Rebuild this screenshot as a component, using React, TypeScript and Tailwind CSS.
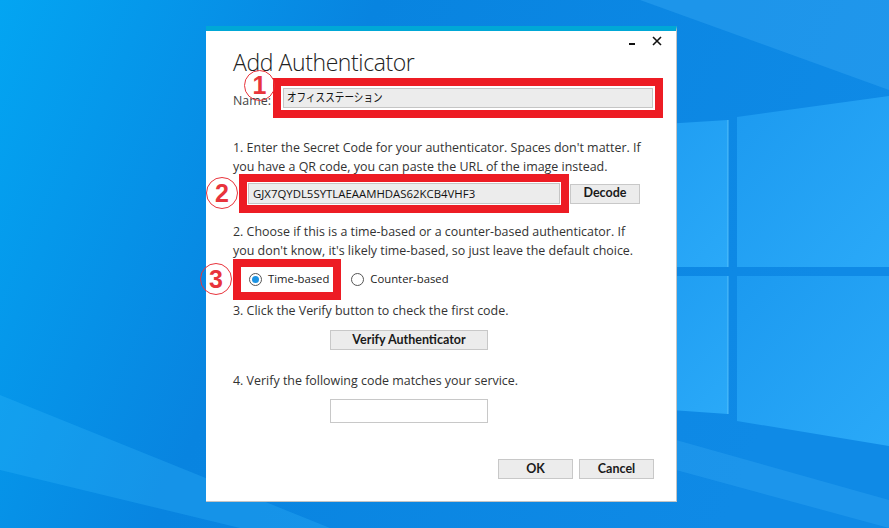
import React from 'react';

const FONT = '"Open Sans", "Noto Sans CJK JP", sans-serif';

function Wallpaper() {
  return (
    <svg className="absolute inset-0" width="889" height="528" viewBox="0 0 889 528">
      <defs>
        <linearGradient id="bg" x1="0" y1="0" x2="1" y2="0.25">
          <stop offset="0" stopColor="#03a5f2" />
          <stop offset="0.4" stopColor="#0884e0" />
          <stop offset="1" stopColor="#0f8ae6" />
        </linearGradient>
        <linearGradient id="pane" x1="0" y1="0" x2="1" y2="1">
          <stop offset="0" stopColor="#1c9af0" />
          <stop offset="1" stopColor="#2aa9f8" />
        </linearGradient>
      </defs>
      <rect width="889" height="528" fill="url(#bg)" />
      {/* light rays */}
      <polygon points="640,0 889,0 889,90" fill="#3fb0f7" opacity="0.35" />
      <polygon points="0,395 0,470 240,528 330,528" fill="#3cc0ff" opacity="0.25" />
      <polygon points="676,440 889,500 889,528 676,470" fill="#44b8fb" opacity="0.25" />
      {/* windows logo panes */}
      <polygon points="600,128 728,120 728,267 600,267" fill="url(#pane)" />
      <polygon points="737,117 889,96 889,267 737,267" fill="url(#pane)" />
      <polygon points="600,276 728,276 728,414 600,405" fill="url(#pane)" />
      <polygon points="737,276 889,276 889,446 737,421" fill="url(#pane)" />
      <line x1="728" y1="120" x2="728" y2="267" stroke="#6fd0ff" strokeWidth="1" opacity="0.7" />
      <line x1="728" y1="276" x2="728" y2="414" stroke="#6fd0ff" strokeWidth="1" opacity="0.7" />
    </svg>
  );
}

function Circled({ n, className }: { n: string; className: string }) {
  return (
    <div
      className={`absolute flex items-center justify-center rounded-full border border-[#e8343c] text-[#e8343c] font-bold text-[25px] leading-none ${className}`}
      style={{ fontFamily: '"Liberation Sans", sans-serif' }}
    >
      {n}
    </div>
  );
}

function Radio({ checked }: { checked?: boolean }) {
  return (
    <div className="w-[13px] h-[13px] rounded-full border border-[#555] bg-white flex items-center justify-center">
      {checked && <div className="w-[7px] h-[7px] rounded-full bg-[#1c93e3]" />}
    </div>
  );
}

function Button({ label, className }: { label: string; className: string }) {
  return (
    <div
      className={`h-[20px] bg-[#ececec] border border-[#c8c8c8] flex items-center justify-center text-[12.5px] font-bold text-[#1a1a1a] ${className}`}
      style={{ fontFamily: 'Lato, sans-serif' }}
    >
      {label}
    </div>
  );
}

export default function App() {
  return (
    <div className="relative w-[889px] h-[528px] overflow-hidden" style={{ fontFamily: FONT }}>
      <Wallpaper />

      {/* Dialog window */}
      <div className="absolute left-[206px] top-[26px] w-[471px] h-[476px] bg-white border-t-[5px] border-t-[#00a8d6] border-r border-b border-r-[#c4c4c4] border-b-[#c4c4c4] flex flex-col pl-[27px] pr-[22px]">
        {/* title bar controls */}
        <div className="h-[19px] flex justify-end items-center mr-[-8px]">
          <div className="w-[6px] h-[2px] bg-[#111] mt-[7px]" />
          <svg className="ml-[17px] mt-[1px]" width="10" height="10" viewBox="0 0 10 10">
            <path d="M1 1 L9 9 M9 1 L1 9" stroke="#111" strokeWidth="1.6" />
          </svg>
        </div>

        {/* title */}
        <div className="text-[23px] leading-[24px] font-light tracking-[-0.4px] text-[#222]">Add Authenticator</div>

        {/* name */}
        <div className="flex items-start mt-[14px]">
          <div className="text-[12.4px] leading-[16px] text-[#444] mt-[5px] w-[50px]">Name:</div>
          <div className="w-[370px] h-[20px] bg-[#ececec] border border-[#c5c5c5] text-[12px] text-[#111] px-[3px] flex items-center outline-solid outline-[8px] outline-[#ed1c24] outline-offset-2">
            <span className="inline-block origin-left scale-x-[0.8] whitespace-nowrap">オフィスステーション</span>
          </div>
        </div>

        {/* step 1 */}
        <div className="text-[12.45px] leading-[19px] text-[#333] mt-[29px] whitespace-nowrap">
          <div>1. Enter the Secret Code for your authenticator. Spaces don't matter. If</div>
          <div>you have a QR code, you can paste the URL of the image instead.</div>
        </div>
        <div className="flex items-center mt-[7px] ml-[15px]">
          <div className="w-[312px] h-[21px] bg-[#ececec] border border-[#c5c5c5] text-[11.4px] text-[#111] px-[4px] flex items-center outline-solid outline-[8px] outline-[#ed1c24] outline-offset-1">
            GJX7QYDL5SYTLAEAAMHDAS62KCB4VHF3
          </div>
          <Button label="Decode" className="w-[70px] ml-[10px]" />
        </div>

        {/* step 2 */}
        <div className="text-[12.45px] leading-[19px] text-[#333] mt-[18px] whitespace-nowrap">
          <div>2. Choose if this is a time-based or a counter-based authenticator. If</div>
          <div>you don't know, it's likely time-based, so just leave the default choice.</div>
        </div>
        <div className="flex items-center mt-[7px] ml-[8px] h-[25px] text-[11.3px] text-[#222]">
          <div className="h-[25px] flex items-center gap-[6px] pl-[8px] pr-[4px] outline-solid outline-[8px] outline-[#ed1c24]">
            <Radio checked />
            <span>Time-based</span>
          </div>
          <div className="flex items-center gap-[6px] ml-[18px]">
            <Radio />
            <span>Counter-based</span>
          </div>
        </div>

        {/* step 3 */}
        <div className="text-[12.45px] leading-[19px] text-[#333] mt-[9px]">
          3. Click the Verify button to check the first code.
        </div>
        <Button label="Verify Authenticator" className="w-[158px] ml-[97px] mt-[10px]" />

        {/* step 4 */}
        <div className="text-[12.45px] leading-[19px] text-[#333] mt-[21px]">
          4. Verify the following code matches your service.
        </div>
        <div className="w-[158px] h-[24px] ml-[97px] mt-[9px] bg-white border border-[#c8c8c8]" />

        {/* buttons */}
        <div className="flex justify-end gap-[6px] mt-[36px]">
          <Button label="OK" className="w-[75px]" />
          <Button label="Cancel" className="w-[75px]" />
        </div>
      </div>

      <Circled n="1" className="left-[244px] top-[70px] w-[31px] h-[31px]" />
      <Circled n="2" className="left-[206px] top-[177px] w-[32px] h-[32px]" />
      <Circled n="3" className="left-[200px] top-[263px] w-[32px] h-[32px]" />
    </div>
  );
}
